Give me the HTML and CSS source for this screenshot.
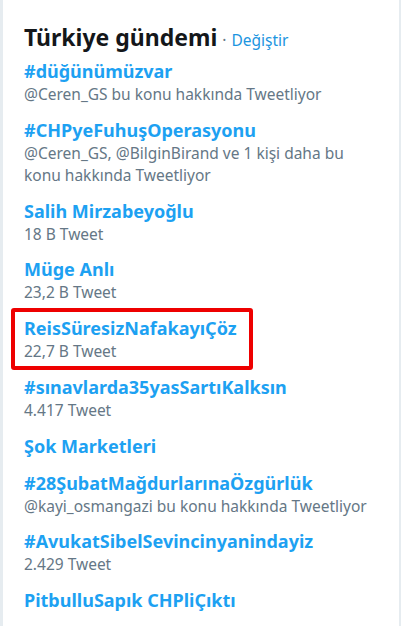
FILE: index.html
```html
<!DOCTYPE html>
<html lang="tr">
<head>
<meta charset="utf-8">
<link rel="stylesheet" href="styles.css">
</head>
<body>
<div class="panel">
  <div class="header">
    <span class="title">Türkiye gündemi</span>
    <span class="dot">·</span>
    <span class="change">Değiştir</span>
  </div>
  <ul class="trends">
    <li class="trend">
      <div class="name">#düğünümüzvar</div>
      <div class="meta">@Ceren_GS bu konu hakkında Tweetliyor</div>
    </li>
    <li class="trend">
      <div class="name">#CHPyeFuhuşOperasyonu</div>
      <div class="meta">@Ceren_GS, @BilginBirand ve 1 kişi daha bu konu hakkında Tweetliyor</div>
    </li>
    <li class="trend">
      <div class="name">Salih Mirzabeyoğlu</div>
      <div class="meta">18 B Tweet</div>
    </li>
    <li class="trend">
      <div class="name">Müge Anlı</div>
      <div class="meta">23,2 B Tweet</div>
    </li>
    <li class="trend highlighted">
      <div class="name">ReisSüresizNafakayıÇöz</div>
      <div class="meta">22,7 B Tweet</div>
    </li>
    <li class="trend">
      <div class="name">#sınavlarda35yasSartıKalksın</div>
      <div class="meta">4.417 Tweet</div>
    </li>
    <li class="trend">
      <div class="name">Şok Marketleri</div>
    </li>
    <li class="trend">
      <div class="name">#28ŞubatMağdurlarınaÖzgürlük</div>
      <div class="meta">@kayi_osmangazi bu konu hakkında Tweetliyor</div>
    </li>
    <li class="trend">
      <div class="name">#AvukatSibelSevincinyanindayiz</div>
      <div class="meta">2.429 Tweet</div>
    </li>
    <li class="trend">
      <div class="name">PitbulluSapık CHPliÇıktı</div>
    </li>
  </ul>
</div>
</body>
</html>
```
FILE: styles.css
```css
html, body {
  margin: 0;
  padding: 0;
  background: #ffffff;
}
body {
  font-family: "Noto Sans", "Open Sans", sans-serif;
}
.panel {
  width: 401px;
  height: 626px;
  box-sizing: border-box;
  border-left: 3px solid #e6ecf0;
  border-right: 2px solid #e6ecf0;
  padding: 21px 21px 0 21px;
  overflow: hidden;
}
.header {
  display: flex;
  align-items: baseline;
  gap: 5px;
  height: 39px;
}
.title {
  font-size: 23px;
  font-weight: 700;
  color: #14171a;
}
.dot {
  font-size: 15.5px;
  color: #657786;
}
.change {
  font-size: 15.5px;
  color: #1b95e0;
}
.trends {
  list-style: none;
  margin: 0;
  padding: 0;
  display: flex;
  flex-direction: column;
  gap: 13.8px;
}
.trend {
  position: relative;
}
.name {
  font-size: 18px;
  font-weight: 700;
  line-height: 23px;
  color: #1da1f2;
}
.meta {
  font-size: 15.5px;
  line-height: 22px;
  color: #657786;
}
.highlighted::after {
  content: "";
  position: absolute;
  left: -13px;
  top: -9px;
  width: 242px;
  height: 62px;
  box-sizing: border-box;
  border: 4px solid #ee0000;
  border-radius: 3px;
}
```
